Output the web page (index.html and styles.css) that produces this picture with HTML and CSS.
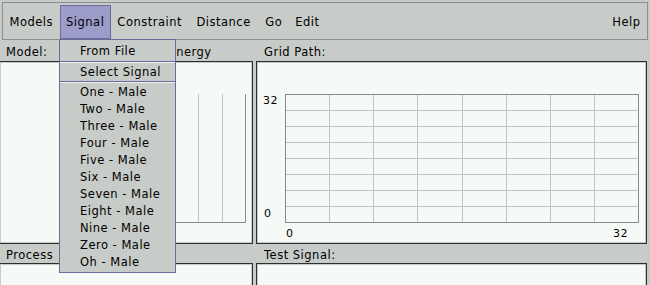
FILE: index.html
```html
<!DOCTYPE html>
<html>
<head>
<meta charset="utf-8">
<link rel="stylesheet" href="styles.css">
</head>
<body>
<div class="app">
  <div class="menubar">
    <span class="mi">Models</span>
    <span class="mi active">Signal</span>
    <span class="mi">Constraint</span>
    <span class="mi mi-wide">Distance</span>
    <span class="mi mi-wide">Go</span>
    <span class="mi">Edit</span>
    <span class="mi help">Help</span>
  </div>
  <div class="workspace">
    <div class="label label-top">Model:<span class="energy">Energy</span></div>
    <div class="label label-top">Grid Path:</div>
    <div class="panel">
      <svg class="chart" width="250" height="179" viewBox="0 0 250 179">
        <g stroke="#c4c4c4" stroke-width="1">
          <line x1="102.5" y1="31" x2="102.5" y2="159"/>
          <line x1="126.5" y1="31" x2="126.5" y2="159"/>
          <line x1="149.5" y1="31" x2="149.5" y2="159"/>
          <line x1="173.5" y1="31" x2="173.5" y2="159"/>
          <line x1="197.5" y1="31" x2="197.5" y2="159"/>
          <line x1="221.5" y1="31" x2="221.5" y2="159"/>
        </g>
        <g stroke="#8a8a8a" stroke-width="1">
          <line x1="60" y1="159.5" x2="245" y2="159.5"/>
          <line x1="244.5" y1="31" x2="244.5" y2="160"/>
        </g>
      </svg>
    </div>
    <div class="panel">
      <svg class="chart" width="387" height="179" viewBox="0 0 387 179">
        <g stroke="#c4c4c4" stroke-width="1">
          <line x1="71.5" y1="31" x2="71.5" y2="159"/>
          <line x1="115.5" y1="31" x2="115.5" y2="159"/>
          <line x1="159.5" y1="31" x2="159.5" y2="159"/>
          <line x1="204.5" y1="31" x2="204.5" y2="159"/>
          <line x1="248.5" y1="31" x2="248.5" y2="159"/>
          <line x1="292.5" y1="31" x2="292.5" y2="159"/>
          <line x1="336.5" y1="31" x2="336.5" y2="159"/>
          <line x1="27" y1="47.5" x2="380" y2="47.5"/>
          <line x1="27" y1="63.5" x2="380" y2="63.5"/>
          <line x1="27" y1="79.5" x2="380" y2="79.5"/>
          <line x1="27" y1="95.5" x2="380" y2="95.5"/>
          <line x1="27" y1="111.5" x2="380" y2="111.5"/>
          <line x1="27" y1="127.5" x2="380" y2="127.5"/>
          <line x1="27" y1="143.5" x2="380" y2="143.5"/>
        </g>
        <rect x="27.5" y="31.5" width="353" height="128" fill="none" stroke="#8a8a8a" stroke-width="1"/>
        <g class="axis-text">
          <text x="5" y="41">32</text>
          <text x="6" y="154">0</text>
          <text x="28" y="174">0</text>
          <text x="355" y="174">32</text>
        </g>
      </svg>
    </div>
    <div class="label label-bottom">Process</div>
    <div class="label label-bottom">Test Signal:</div>
    <div class="panel"></div>
    <div class="panel"></div>
  </div>
  <div class="dropdown">
    <div class="dd-item dd-first">From File</div>
    <div class="dd-sep"></div>
    <div class="dd-item dd-second">Select Signal</div>
    <div class="dd-sep"></div>
    <div class="dd-item">One - Male</div>
    <div class="dd-item">Two - Male</div>
    <div class="dd-item">Three - Male</div>
    <div class="dd-item">Four - Male</div>
    <div class="dd-item">Five - Male</div>
    <div class="dd-item">Six - Male</div>
    <div class="dd-item">Seven - Male</div>
    <div class="dd-item">Eight - Male</div>
    <div class="dd-item">Nine - Male</div>
    <div class="dd-item">Zero - Male</div>
    <div class="dd-item">Oh - Male</div>
  </div>
</div>
</body>
</html>
```

FILE: styles.css
```css
html, body {
  margin: 0;
  padding: 0;
}
body {
  width: 650px;
  height: 285px;
  overflow: hidden;
  background: #c8ccc8;
  font-family: "DejaVu Sans", "Liberation Sans", sans-serif;
  font-size: 11.5px;
  letter-spacing: 0.5px;
  color: #000;
}
.app {
  position: relative;
  width: 650px;
  height: 285px;
  overflow: hidden;
}
.menubar {
  box-sizing: border-box;
  display: flex;
  align-items: stretch;
  height: 38px;
  margin: 2px 2px 0 2px;
  padding-top: 2px;
  border: 1px solid #8c908c;
}
.mi {
  display: flex;
  align-items: center;
  height: 34px;
  box-sizing: border-box;
  padding: 0 5.5px;
  border: 1px solid transparent;
  white-space: nowrap;
}
.mi-wide {
  margin-left: 1.5px;
}
.mi.active {
  background: #9d9dca;
  border-color: #6c6c9c;
}
.mi.help {
  margin-left: auto;
}
.workspace {
  display: grid;
  grid-template-columns: 254px 391px;
  grid-template-rows: 21px 183px 19px 60px;
  column-gap: 3px;
  margin-left: -1px;
}
.label {
  box-sizing: border-box;
  padding-top: 2px;
  display: flex;
  align-items: center;
  white-space: nowrap;
}
.label:nth-child(odd) {
  padding-left: 7px;
}
.label:nth-child(even) {
  padding-left: 8px;
}
.energy {
  margin-left: 121px;
}
.panel {
  box-sizing: border-box;
  border: 1px solid #2e2e2e;
  padding: 1px;
  background: #f6faf6;
  box-shadow: inset 0 0 0 1px #c8ccc8;
  overflow: hidden;
}
.chart {
  display: block;
  shape-rendering: crispEdges;
}
.axis-text text {
  font-family: "DejaVu Sans", sans-serif;
  font-size: 11px;
  letter-spacing: 0.5px;
  fill: #000;
}
.dropdown {
  position: absolute;
  left: 59px;
  top: 39px;
  width: 117px;
  box-sizing: border-box;
  border: 1px solid #6c6c9c;
  background: #c8ccc8;
  padding-bottom: 2px;
}
.dd-item {
  height: 17px;
  display: flex;
  align-items: center;
  padding-left: 20px;
  white-space: nowrap;
}
.dd-first {
  height: 21px;
}
.dd-second {
  height: 18px;
}
.dd-sep {
  height: 0;
  border-top: 1px solid #6c6c9c;
  border-bottom: 1px solid #eef0ee;
}
```
